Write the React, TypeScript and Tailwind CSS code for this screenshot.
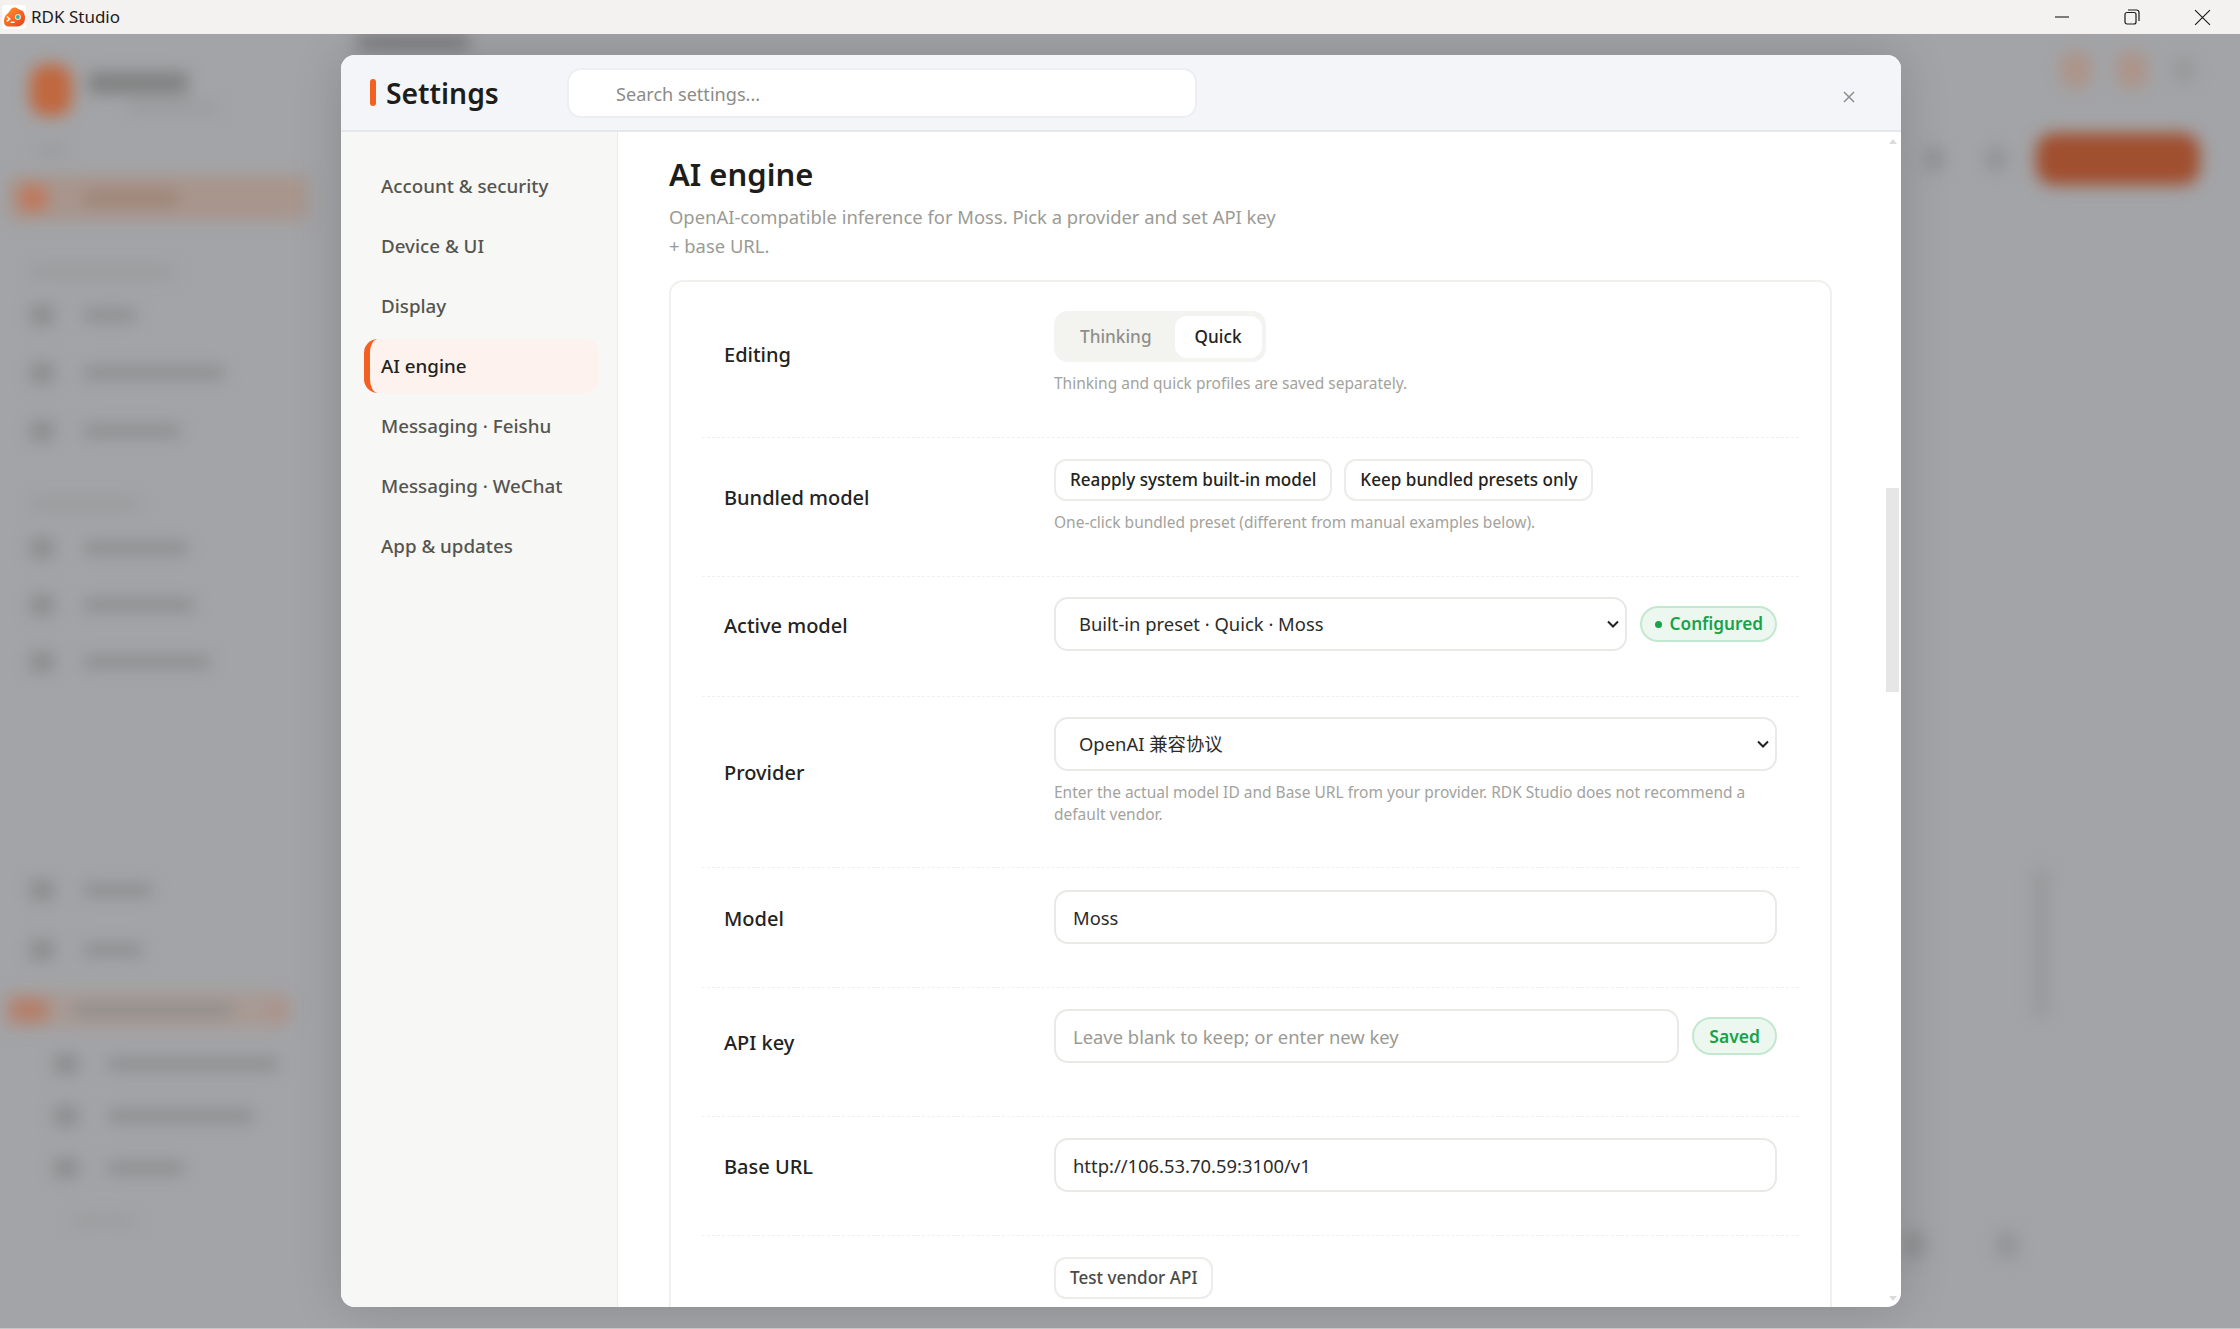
import React from 'react';

const navItems = [
  'Account & security',
  'Device & UI',
  'Display',
  'AI engine',
  'Messaging · Feishu',
  'Messaging · WeChat',
  'App & updates',
];

const fieldClass =
  'h-[54px] rounded-[14px] border-2 border-[#e9e9e6] bg-white text-[18.4px] text-[#2b2b28] outline-none';

function Logo() {
  return (
    <div className="flex h-[24px] w-[24px] items-center justify-center rounded-[3px] bg-white">
      <svg width="23" height="23" viewBox="0 0 24 24">
        <defs>
          <linearGradient id="blob" x1="0" y1="0" x2="1" y2="1">
            <stop offset="0" stopColor="#fb9a2c" />
            <stop offset="1" stopColor="#ee3a22" />
          </linearGradient>
        </defs>
        <path
          d="M9 2.500c2-1.500 5-1 6.500.3 1.500 1.200 4 1 5.500 3 2 2.700 2.500 7 1.500 10-1.300 3.700-5 5.700-9 5.700H6c-3 0-5-2-5-5 0-3 .5-6 3-8 2-1.500 3.500-4.500 5-6z"
          fill="url(#blob)"
        />
        <path d="M4 11l3 2.500L4 16" fill="none" stroke="#fff" strokeWidth="1.500" />
        <path d="M8 17h4" stroke="#fff" strokeWidth="1.500" />
        <circle cx="15.500" cy="11.500" r="3.200" fill="#fde3b0" />
        <circle cx="15.500" cy="11.500" r="2" fill="#22b8b0" />
      </svg>
    </div>
  );
}

function TitleBar() {
  return (
    <div className="flex h-[34px] shrink-0 items-center bg-[#f4f1f1] pl-[2px]">
      <Logo />
      <span className="ml-[5px] text-[17px] text-[#1c1c1c]">RDK Studio</span>
      <div className="ml-auto flex items-center">
        <div className="flex w-[70px] justify-center">
          <svg width="16" height="16" viewBox="0 0 16 16">
            <path d="M1 8h14" stroke="#1a1a1a" strokeWidth="1.100" />
          </svg>
        </div>
        <div className="flex w-[70px] justify-center">
          <svg width="16" height="16" viewBox="0 0 16 16" fill="none" stroke="#1a1a1a" strokeWidth="1.200">
            <rect x="1" y="3.500" width="11" height="11.500" rx="2" />
            <path d="M4 1h8.500a2.500 2.500 0 0 1 2.500 2.500V12" />
          </svg>
        </div>
        <div className="mr-[3px] flex w-[70px] justify-center">
          <svg width="17" height="17" viewBox="0 0 16 16">
            <path d="M1 1l14 14M15 1L1 15" stroke="#1a1a1a" strokeWidth="1.100" />
          </svg>
        </div>
      </div>
    </div>
  );
}

function BlurRow({ text, tone = 'bg-[#8b8c8d]' }: { text: string; tone?: string }) {
  return (
    <div className="flex h-[16px] items-center">
      <div className={`h-[20px] w-[24px] rounded-[4px] ${tone}`} />
      <div className={`ml-[30px] h-[12px] rounded-[3px] ${text} ${tone}`} />
    </div>
  );
}

// the app behind the dialog, only ever seen blurred
function Backdrop() {
  return (
    <div className="flex h-full blur-[8px]">
      <div className="flex w-[320px] shrink-0 flex-col pl-[30px]">
        <div className="mt-[30px] flex">
          <div className="h-[52px] w-[42px] rounded-[16px] bg-[#c0683f]" />
          <div className="ml-[16px] flex flex-col">
            <div className="mt-[8px] h-[22px] w-[100px] rounded-[4px] bg-[#808181]" />
            <div className="ml-[40px] mt-[10px] h-[8px] w-[90px] rounded-[3px] bg-[#979899]" />
          </div>
        </div>
        <div className="ml-[6px] mt-[30px] h-[10px] w-[30px] rounded-[3px] bg-[#999a9b]" />
        <div className="-ml-[22px] mt-[20px] flex h-[44px] w-[300px] items-center rounded-[8px] bg-[#a8958c] pl-[12px]">
          <div className="h-[26px] w-[26px] rounded-[6px] bg-[#c0775a]" />
          <div className="ml-[38px] h-[16px] w-[94px] rounded-[4px] bg-[#9e8577]" />
        </div>
        <div className="mt-[47px] h-[10px] w-[146px] rounded-[3px] bg-[#98999a]" />
        <div className="mt-[30px] flex flex-col gap-[42px]">
          <BlurRow text="w-[52px]" />
          <BlurRow text="w-[140px]" />
          <BlurRow text="w-[96px]" />
        </div>
        <div className="mt-[60px] h-[10px] w-[110px] rounded-[3px] bg-[#98999a]" />
        <div className="mt-[31px] flex flex-col gap-[41px]">
          <BlurRow text="w-[104px]" />
          <BlurRow text="w-[110px]" />
          <BlurRow text="w-[126px]" />
        </div>
        <div className="mt-[212px] flex flex-col gap-[44px]">
          <BlurRow text="w-[68px]" />
          <BlurRow text="w-[58px]" />
        </div>
        <div className="-ml-[28px] mt-[34px] flex h-[36px] w-[288px] items-center rounded-[8px] bg-[#a89a94] pl-[8px]">
          <div className="h-[24px] w-[38px] rounded-[6px] bg-[#b47f6a]" />
          <div className="ml-[26px] h-[12px] w-[160px] rounded-[3px] bg-[#8d8d8b]" />
          <div className="ml-[36px] h-[18px] w-[22px] rounded-[4px] bg-[#ad928a]" />
        </div>
        <div className="ml-[24px] mt-[28px] flex flex-col gap-[36px]">
          <BlurRow text="w-[170px]" />
          <BlurRow text="w-[146px]" />
          <BlurRow text="w-[76px]" />
        </div>
        <div className="ml-[42px] mt-[41px] h-[8px] w-[64px] rounded-[3px] bg-[#99999a]" />
      </div>
      <div className="flex-1">
        <div className="ml-[37px] h-[16px] w-[112px] rounded-[4px] bg-[#7d7d80]" />
      </div>
      <div className="flex w-[340px] shrink-0 flex-col items-end pr-[40px]">
        <div className="mr-[5px] mt-[18px] flex items-center gap-[26px]">
          <div className="h-[36px] w-[30px] rounded-[10px] bg-[#ad9489]" />
          <div className="h-[36px] w-[30px] rounded-[10px] bg-[#ad9489]" />
          <div className="h-[26px] w-[22px] rounded-[6px] bg-[#98999a]" />
        </div>
        <div className="mt-[45px] flex items-center">
          <div className="h-[24px] w-[20px] rounded-[8px] bg-[#909193]" />
          <div className="ml-[42px] h-[24px] w-[20px] rounded-[8px] bg-[#919294]" />
          <div className="ml-[30px] h-[52px] w-[164px] rounded-[18px] bg-[#a04f2f]" />
        </div>
        <div className="mr-[151px] mt-[683px] h-[150px] w-[16px] rounded-[6px] bg-[#98999b]" />
        <div className="mr-[182px] mt-[213px] flex gap-[71px]">
          <div className="h-[28px] w-[22px] rounded-[8px] bg-[#8f9092]" />
          <div className="h-[28px] w-[22px] rounded-[8px] bg-[#939496]" />
        </div>
      </div>
    </div>
  );
}

function Row({
  label,
  children,
  className,
  last = false,
}: {
  label: string;
  children: React.ReactNode;
  className: string;
  last?: boolean;
}) {
  return (
    <div className={`flex items-center px-[22px] ${last ? '' : 'border-b border-dashed border-[#efefec]'} ${className}`}>
      <div className="w-[330px] shrink-0 pt-[4px] text-[20px] font-medium text-[#232320]">{label}</div>
      <div className="min-w-0 flex-1">{children}</div>
    </div>
  );
}

function Hint({ children }: { children: React.ReactNode }) {
  return <p className="mt-[10px] text-[15.5px] leading-[22px] text-[#a3a39d]">{children}</p>;
}

function Btn({ children, muted = false }: { children: React.ReactNode; muted?: boolean }) {
  return (
    <button
      className={`h-[42px] rounded-[12px] border-2 border-[#ecece9] bg-white px-[14px] text-[17.1px] font-medium ${
        muted ? 'text-[#4a4a46]' : 'text-[#232320]'
      }`}
    >
      {children}
    </button>
  );
}

function Select({ value, children, className }: { value: string; children: React.ReactNode; className: string }) {
  return (
    <div className={`relative ${className}`}>
      <select defaultValue={value} className={`${fieldClass} w-full appearance-none pl-[23px] pr-[30px]`}>
        {children}
      </select>
      <svg
        className="pointer-events-none absolute right-[8px] top-[21px]"
        width="12"
        height="12"
        viewBox="0 0 12 12"
        fill="none"
        stroke="#222"
        strokeWidth="2"
      >
        <path d="M1 3.500l5 5 5-5" />
      </svg>
    </div>
  );
}

function AiEngine() {
  return (
    <div className="pl-[51px] pr-[54px] pt-[20px]">
      <h2 className="text-[31px] font-semibold leading-[44px] text-[#1d1d1b]">AI engine</h2>
      <p className="mt-[6px] max-w-[612px] text-[18.4px] leading-[29px] text-[#9b9b95]">
        OpenAI-compatible inference for Moss. Pick a provider and set API key + base URL.
      </p>
      <div className="mt-[20px] rounded-[14px] border-2 border-[#f0f0ed] px-[31px]">
        <Row label="Editing" className="pt-[29px] pb-[43px]">
          <div className="flex h-[51px] w-fit items-center rounded-[14px] bg-[#f3f3f0] px-[4px]">
            <div className="pl-[22px] pr-[23px] text-[17.2px] font-medium text-[#8f8f89]">Thinking</div>
            <div className="flex h-[42px] items-center rounded-[12px] bg-white px-[20px] text-[17.2px] font-medium text-[#232320]">
              Quick
            </div>
          </div>
          <Hint>Thinking and quick profiles are saved separately.</Hint>
        </Row>
        <Row label="Bundled model" className="pt-[21px] pb-[43px]">
          <div className="flex gap-[12px]">
            <Btn>Reapply system built-in model</Btn>
            <Btn>Keep bundled presets only</Btn>
          </div>
          <Hint>One-click bundled preset (different from manual examples below).</Hint>
        </Row>
        <Row label="Active model" className="pt-[20px] pb-[45px]">
          <div className="flex items-center gap-[13px]">
            <Select value="moss" className="min-w-0 flex-1">
              <option value="moss">Built-in preset · Quick · Moss</option>
            </Select>
            <span className="flex h-[36px] items-center gap-[8px] rounded-full border-2 border-[#c3e8d0] bg-[#ecf7ef] pl-[13px] pr-[12px] text-[17.2px] font-semibold text-[#16a34a]">
              <span className="h-[7px] w-[7px] rounded-full bg-[#16a34a]" />
              Configured
            </span>
          </div>
        </Row>
        <Row label="Provider" className="pt-[20px] pb-[42px]">
          <Select value="openai" className="w-full">
            <option value="openai">OpenAI 兼容协议</option>
          </Select>
          <Hint>
            Enter the actual model ID and Base URL from your provider. RDK Studio does not recommend a default vendor.
          </Hint>
        </Row>
        <Row label="Model" className="pt-[22px] pb-[43px]">
          <input readOnly value="Moss" className={`${fieldClass} w-full px-[17px]`} />
        </Row>
        <Row label="API key" className="pt-[21px] pb-[43px]">
          <div className="flex items-center gap-[13px]">
            <input
              placeholder="Leave blank to keep; or enter new key"
              className={`${fieldClass} min-w-0 flex-1 px-[17px] placeholder:text-[#9a9a94]`}
            />
            <span className="flex h-[38px] items-center rounded-full border-2 border-[#c3e8d0] bg-[#ecf7ef] px-[15px] text-[17.5px] font-semibold text-[#16a34a]">
              Saved
            </span>
          </div>
          <div className="h-[10px]" />
        </Row>
        <Row label="Base URL" className="pt-[21px] pb-[43px]">
          <input readOnly value="http://106.53.70.59:3100/v1" className={`${fieldClass} w-full px-[17px]`} />
        </Row>
        <Row label="" className="pt-[21px] pb-[40px]" last>
          <Btn muted>Test vendor API</Btn>
        </Row>
      </div>
    </div>
  );
}

function SettingsDialog() {
  return (
    <div className="absolute left-[341px] top-[21px] flex h-[1252px] w-[1560px] flex-col overflow-hidden rounded-[14px] bg-white shadow-[0_0_50px_rgba(0,0,0,0.16)]">
      <header className="flex h-[77px] shrink-0 items-center border-b-2 border-[#e6e7eb] bg-[#f4f5f9] pl-[29px]">
        <div className="h-[27px] w-[6px] rounded-full bg-[#f26122]" />
        <h1 className="ml-[10px] w-[181px] pt-[2px] text-[28.3px] font-semibold text-[#1d1d1b]">Settings</h1>
        <div className="flex h-[50px] w-[630px] items-center rounded-[14px] border-2 border-[#eceef3] bg-white pl-[47px] pt-[5px] text-[18.1px] text-[#8c8c87]">
          Search settings...
        </div>
        <button className="ml-auto mr-[45px] mt-[8px] text-[#8f8f8a]">
          <svg width="14" height="14" viewBox="0 0 14 14">
            <path d="M2 2l10 10M12 2L2 12" stroke="currentColor" strokeWidth="1.500" />
          </svg>
        </button>
      </header>
      <div className="flex min-h-0 flex-1">
        <nav className="flex w-[277px] shrink-0 flex-col gap-[6px] border-r border-[#ebebe8] bg-[#f7f7f5] pl-[23px] pr-[18px] pt-[27px]">
          {navItems.map((item) =>
            item === 'AI engine' ? (
              <div
                key={item}
                className="flex h-[54px] items-center rounded-[14px] border-l-[6px] border-[#f26122] bg-[#fdf2ed] pl-[11px] text-[18.75px] font-medium text-[#232320]"
              >
                {item}
              </div>
            ) : (
              <div key={item} className="flex h-[54px] items-center pl-[17px] text-[18.75px] font-medium text-[#55554f]">
                {item}
              </div>
            ),
          )}
        </nav>
        <div className="relative min-w-0 flex-1 overflow-hidden pr-[15px]">
          <AiEngine />
          <div className="absolute bottom-0 right-0 top-0 w-[15px]">
            <div className="absolute left-[3px] top-[7px] h-0 w-0 border-x-[4px] border-b-[5px] border-x-transparent border-b-[#dcdcdc]" />
            <div className="absolute left-0 top-[356px] h-[204px] w-[13px] bg-[#e6e6e6]" />
            <div className="absolute bottom-[6px] left-[3px] h-0 w-0 border-x-[4px] border-t-[5px] border-x-transparent border-t-[#dcdcdc]" />
          </div>
        </div>
      </div>
    </div>
  );
}

export default function App() {
  return (
    <div className="flex h-[1329px] w-[2240px] flex-col overflow-hidden font-['Noto_Sans','Noto_Sans_CJK_SC',sans-serif]">
      <TitleBar />
      <div className="relative min-h-0 flex-1 overflow-hidden bg-[#a3a4a7]">
        <Backdrop />
        <SettingsDialog />
      </div>
      <div className="h-[1px] shrink-0 bg-[#c6c7c8]" />
    </div>
  );
}
